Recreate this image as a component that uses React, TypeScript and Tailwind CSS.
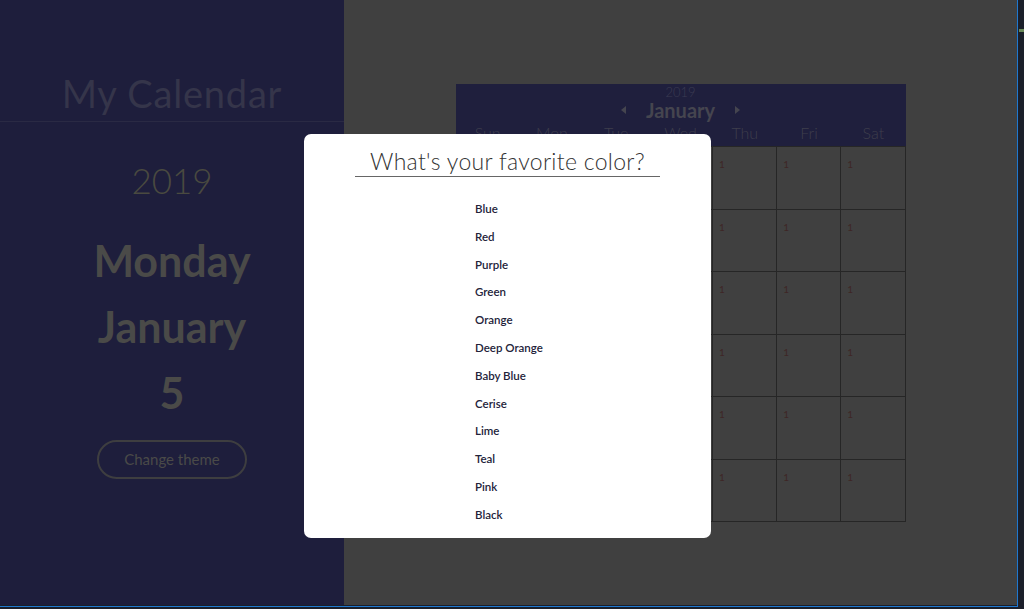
const colors = [
  "Blue",
  "Red",
  "Purple",
  "Green",
  "Orange",
  "Deep Orange",
  "Baby Blue",
  "Cerise",
  "Lime",
  "Teal",
  "Pink",
  "Black",
];

const days = ["Sun", "Mon", "Tue", "Wed", "Thu", "Fri", "Sat"];

function Calendar() {
  return (
    <div className="w-[450px] mt-[84px] mx-auto">
      {/* header */}
      <div className="bg-[#1f1f3d] h-[62px] flex flex-col items-center">
        <div className="text-[13px] leading-[14px] mt-[1px] text-[#3b3b52] font-light">2019</div>
        <div className="flex items-center gap-[19px] h-[22px]">
          <svg width="6" height="8" viewBox="0 0 6 8">
            <path d="M5 0L0 4l5 4z" fill="#45454f" />
          </svg>
          <span className="text-[20px] leading-[22px] font-bold text-[#45454f]">January</span>
          <svg width="6" height="8" viewBox="0 0 6 8">
            <path d="M1 0l5 4-5 4z" fill="#45454f" />
          </svg>
        </div>
        <div className="grid grid-cols-7 w-full mt-[2px]">
          {days.map((d) => (
            <div key={d} className="text-center text-[16px] leading-[20px] font-light text-[#3e3e4c]">
              {d}
            </div>
          ))}
        </div>
      </div>
      {/* cells */}
      <div className="grid grid-cols-7 border-l border-t border-[#262626]">
        {Array.from({ length: 42 }).map((_, i) => (
          <div key={i} className="h-[62.5px] border-r border-b border-[#262626] px-[6px] pt-[3px]">
            <span className="text-[10px] leading-[12px] text-[#3e2626]">1</span>
          </div>
        ))}
      </div>
    </div>
  );
}

function ColorModal() {
  return (
    <div className="absolute left-[304px] top-[134px] w-[407px] h-[404px] bg-white rounded-[7px] flex flex-col items-center">
      <h2 className="w-3/4 text-center text-[23px] leading-[28px] font-light text-[#333] tracking-[0.3px] pt-[13px] pb-[1px] border-b-[1.5px] border-[#666]">
        What's your favorite color?
      </h2>
      <ul className="mt-[18px] self-start ml-[171px]">
        {colors.map((c) => (
          <li key={c} className="text-[11.5px] leading-[27.8px] font-semibold text-[#23233a]">
            {c}
          </li>
        ))}
      </ul>
    </div>
  );
}

export default function App() {
  return (
    <div className="w-[1024px] h-[609px] bg-[#1b1f2a] overflow-hidden" style={{ fontFamily: "Lato, 'Noto Sans', sans-serif" }}>
      <div className="flex">
        <div className="relative w-[1017px] h-[605px] flex">
          {/* sidebar */}
          <aside className="w-[344px] h-full bg-[#1e1e3c] flex flex-col items-center">
            <div className="w-full border-b border-[#2a2a44] pt-[73px] pb-[8px] text-center">
              <h1 className="text-[38px] leading-[40px] font-normal text-[#35354a] tracking-[0.8px]">My Calendar</h1>
            </div>
            <div className="mt-[38px] text-[35px] leading-[40px] font-light text-[#4a4a40]">2019</div>
            <div className="mt-[28px] flex flex-col items-center text-[43px] leading-[66px] font-bold text-[#4a4a48]">
              <div>Monday</div>
              <div>January</div>
              <div>5</div>
            </div>
            <button className="mt-[14px] w-[150px] h-[39px] rounded-full border-2 border-[#3e3e40] text-[15px] text-[#4a4a48]">
              Change theme
            </button>
          </aside>
          {/* main */}
          <main className="flex-1 bg-[#404040]">
            <Calendar />
          </main>
          <ColorModal />
        </div>
        <div className="w-px h-[606px] bg-[#1f78cf]" />
        <div className="flex-1 relative">
          <div className="absolute left-[1px] top-[29px] w-[5px] h-[3px] bg-[#6a8a5a]" />
        </div>
      </div>
      <div className="w-[1018px] h-px bg-[#1f78cf]" />
    </div>
  );
}
